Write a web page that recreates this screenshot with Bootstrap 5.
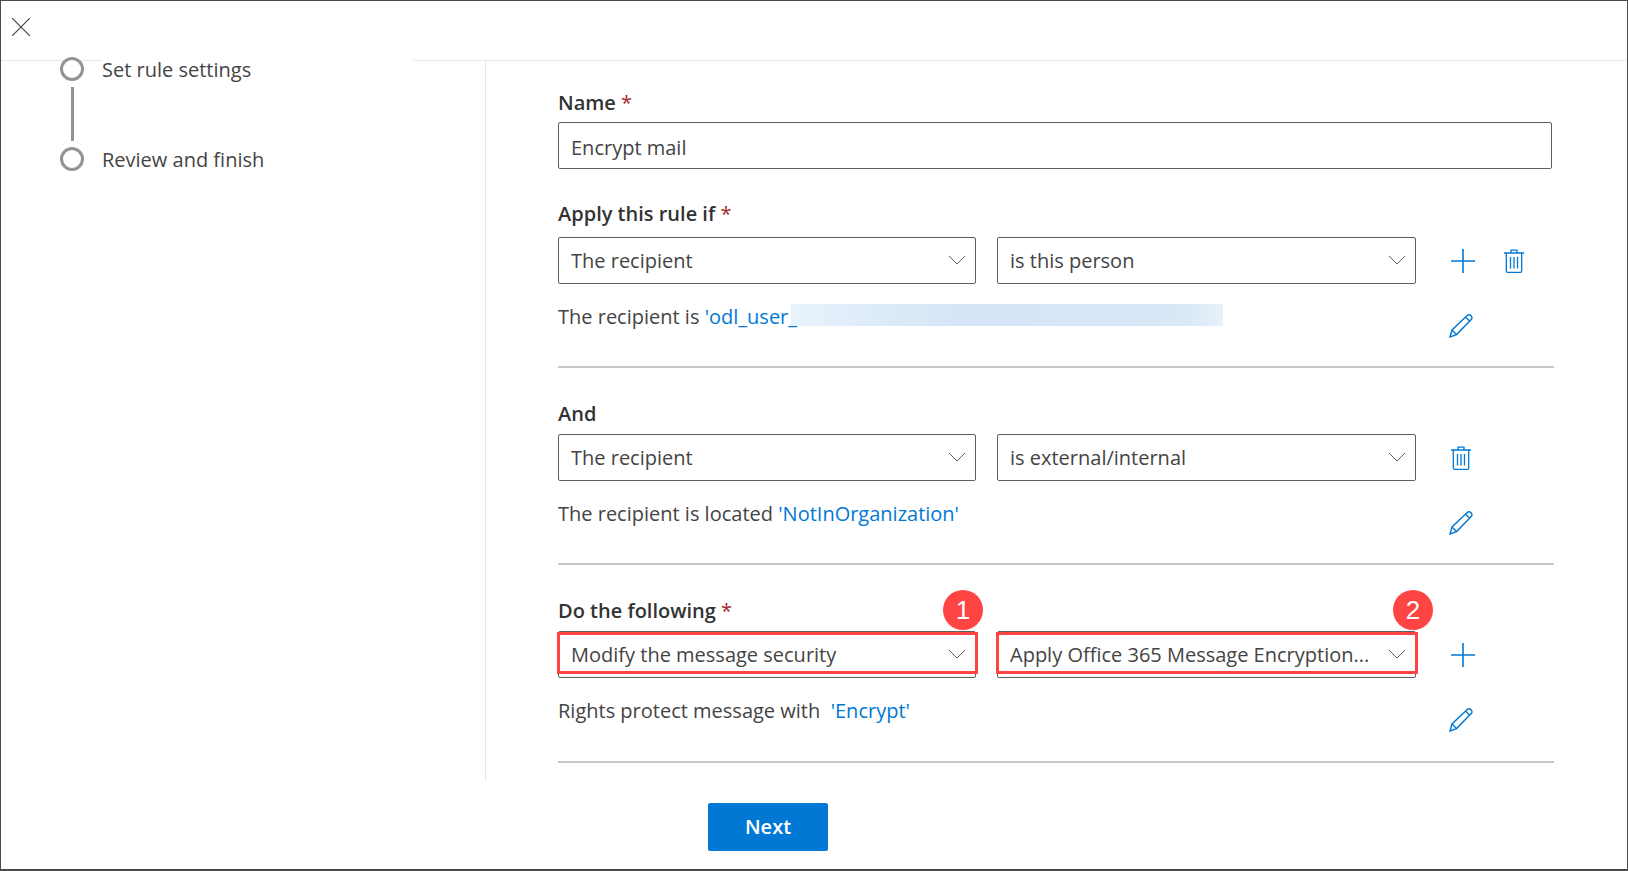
<!DOCTYPE html>
<html lang="en">

<head>
    <meta charset="UTF-8">
    <meta name="viewport" content="width=device-width, initial-scale=1.0">
    <title>Encrypt mail rule</title>
    <link rel="stylesheet" href="https://cdn.jsdelivr.net/npm/bootstrap@5.3.3/dist/css/bootstrap.min.css">
    <style>
        html, body { height: 100%; overflow: hidden; }
        body { font-family: "Open Sans", "Noto Sans", sans-serif; font-size: 20px; color: #444; background: #fff; }
        .page-frame { height: 871px; border: 1px solid #4a4a4a; border-width: 1px 1px 2px 1px; display: flex; flex-direction: column; }
        .top-bar { height: 60px; flex: none; border-bottom: 1px solid #e6e6e6; padding: 17px 0 0 11px; }
        .top-bar svg { display: block; }
        .work-area { height: 720px; flex: none; display: flex; }
        .steps-side { width: 485px; flex: none; border-right: 1px solid #e6e6e6; padding: 0 0 0 59px; }
        .step-item { display: flex; align-items: center; height: 24px; }
        .step-dot { width: 24px; height: 24px; flex: none; border: 3px solid #949494; border-radius: 50%; background: #fff; }
        .step-text { width: 311px; height: 25px; padding-top: 1px; margin-left: 18px; background: #fff; line-height: 24px; }
        .step-first { margin-top: -4px; }
        .step-line { width: 3px; height: 54px; margin: 6px 0 6px 11px; background: #949494; }
        .form-side { flex: 1; padding: 30px 0 0 72px; width: 1070px; }
        .field-label { font-weight: 600; color: #333; line-height: 24px; margin-bottom: 8px; display: block; }
        .field-label i { color: #a4262c; font-style: normal; font-weight: 400; }
        .label-name { margin-bottom: 7px; }
        .label-wide { margin-bottom: 11px; }
        .rule-input.form-control, .rule-select.form-select { height: 47px; border: 1px solid #605e5c; border-radius: 2px; color: #444; font-size: 20px; padding: 0 12px; box-shadow: none; }
        .rule-input.form-control { width: 994px; padding-top: 3px; margin-bottom: 33px; }
        .rule-select.form-select { padding-right: 36px; background-size: 20px 12px; background-position: right 8px top 16px;
            background-image: url("data:image/svg+xml,%3csvg xmlns='http://www.w3.org/2000/svg' viewBox='0 0 20 12'%3e%3cpath fill='none' stroke='%23605e5c' d='M2 2l8 8 8-8'/%3e%3c/svg%3e"); }
        .rule-block { width: 996px; }
        .rule-row { display: grid; grid-template-columns: 418px 419px 1fr; column-gap: 21px; }
        .select-box { position: relative; }
        .mark-box { position: absolute; left: -1px; top: 1px; right: -2px; height: 42px; border: 3px solid #ff4444; pointer-events: none; }
        .num-badge { position: absolute; top: -41px; right: -7px; width: 40px; height: 40px; border-radius: 50%; background: #ff4444; color: #fff; font-family: "Liberation Sans", sans-serif; font-size: 26px; line-height: 40px; text-align: center; }
        .badge-far { right: -17px; }
        .row-actions { display: flex; align-items: center; gap: 29px; padding-left: 14px; }
        .row-actions svg, .desc-row svg { display: block; flex: none; }
        .desc-row { height: 83px; display: grid; grid-template-columns: 858px 1fr; padding-top: 9px; }
        .desc-row p { margin: 12px 0 0; line-height: 24px; position: relative; height: 24px; }
        .desc-row a { color: #0078d4; text-decoration: none; }
        .desc-edit { padding: 21px 0 0 33px; }
        .blur-patch { position: absolute; left: 233px; top: -1px; width: 432px; height: 22px; background: linear-gradient(90deg, #e8f2fb 0, #d3e5f6 40%, #d8e8f7 90%, #e6f1fa 100%); }
        .rule-sep { height: 2px; background: #c8c8c8; margin: -1px 0 34px; }
        .next-wrap { padding: 22px 0 0 707px; }
        .next-btn.btn { width: 120px; height: 48px; background: #0078d4; border: 0; border-radius: 2px; color: #fff; font-weight: 600; font-size: 20px; padding: 0; }
    </style>
    <script src="https://cdn.jsdelivr.net/npm/bootstrap@5.3.3/dist/js/bootstrap.bundle.min.js"></script>
</head>

<body>
    <svg width="0" height="0" class="d-block">
        <defs>
            <g id="icoPlus"><path d="M12 0v24M0 12h24" fill="none" stroke="#0078d4" stroke-width="1.6"/></g>
            <g id="icoTrash" fill="none" stroke="#0078d4" stroke-width="1.3">
                <path d="M0 4h20M7 4V1.2h6V4M2.3 4v18q0 1.3 1.3 1.3h12.8q1.3 0 1.3-1.3V4M6.5 8v11.5M10 8v11.5M13.5 8v11.5"/>
            </g>
            <g id="icoPencil" fill="none" stroke="#0078d4" stroke-width="1.4">
                <path d="M1 23l2-7L18.2 1.6q2-1.6 3.8.2t.2 3.8L7.6 20.6zM3 16l5 5M17 3.5l4 4"/>
            </g>
        </defs>
    </svg>
    <div class="page-frame">
        <header class="top-bar">
            <svg width="18" height="18" viewBox="0 0 18 18"><path d="M0 0l18 18M18 0L0 18" fill="none" stroke="#444" stroke-width="1.2"/></svg>
        </header>
        <div class="work-area">
            <aside class="steps-side">
                <div class="step-item step-first">
                    <span class="step-dot"></span><span class="step-text">Set rule settings</span>
                </div>
                <div class="step-line"></div>
                <div class="step-item">
                    <span class="step-dot"></span><span class="step-text">Review and finish</span>
                </div>
            </aside>
            <main class="form-side">
                <form class="rule-block">
                    <label class="field-label label-name" for="ruleName">Name <i>*</i></label>
                    <input class="form-control rule-input" id="ruleName" type="text" value="Encrypt mail">

                    <label class="field-label label-wide">Apply this rule if <i>*</i></label>
                    <div class="rule-row">
                        <select class="form-select rule-select"><option>The recipient</option></select>
                        <select class="form-select rule-select"><option>is this person</option></select>
                        <div class="row-actions">
                            <svg width="24" height="24"><use href="#icoPlus"/></svg>
                            <svg width="20" height="24"><use href="#icoTrash"/></svg>
                        </div>
                    </div>
                    <div class="desc-row">
                        <p>The recipient is <a href="#">'odl_user_</a><span class="blur-patch"></span></p>
                        <div class="desc-edit"><svg width="24" height="24"><use href="#icoPencil"/></svg></div>
                    </div>
                    <div class="rule-sep"></div>

                    <label class="field-label">And</label>
                    <div class="rule-row">
                        <select class="form-select rule-select"><option>The recipient</option></select>
                        <select class="form-select rule-select"><option>is external/internal</option></select>
                        <div class="row-actions">
                            <svg width="20" height="24"><use href="#icoTrash"/></svg>
                        </div>
                    </div>
                    <div class="desc-row">
                        <p>The recipient is located <a href="#">'NotInOrganization'</a></p>
                        <div class="desc-edit"><svg width="24" height="24"><use href="#icoPencil"/></svg></div>
                    </div>
                    <div class="rule-sep"></div>

                    <label class="field-label">Do the following <i>*</i></label>
                    <div class="rule-row">
                        <div class="select-box">
                            <select class="form-select rule-select"><option>Modify the message security</option></select>
                            <span class="mark-box"></span>
                            <span class="num-badge">1</span>
                        </div>
                        <div class="select-box">
                            <select class="form-select rule-select"><option>Apply Office 365 Message Encryption...</option></select>
                            <span class="mark-box"></span>
                            <span class="num-badge badge-far">2</span>
                        </div>
                        <div class="row-actions">
                            <svg width="24" height="24"><use href="#icoPlus"/></svg>
                        </div>
                    </div>
                    <div class="desc-row">
                        <p>Rights protect message with &nbsp;<a href="#">'Encrypt'</a></p>
                        <div class="desc-edit"><svg width="24" height="24"><use href="#icoPencil"/></svg></div>
                    </div>
                    <div class="rule-sep mt-0 mb-0"></div>
                </form>
            </main>
        </div>
        <div class="next-wrap">
            <button class="btn next-btn" type="button">Next</button>
        </div>
    </div>
</body>

</html>
